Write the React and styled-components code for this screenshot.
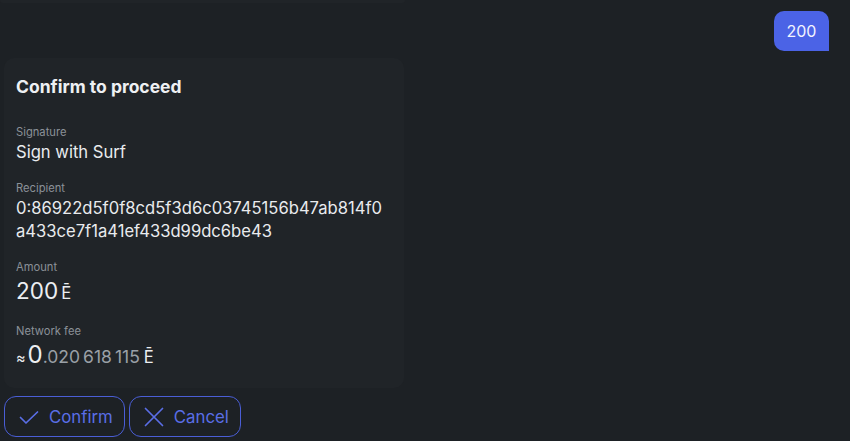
import React from 'react'
import styled, { createGlobalStyle } from 'styled-components'

const GlobalStyle = createGlobalStyle`
  html, body {
    margin: 0;
    padding: 0;
    background: #1d2125;
    font-family: Inter, "Noto Sans", sans-serif;
  }
`

const Page = styled.div`
  width: 850px;
  height: 441px;
  overflow: hidden;
  background: #1d2125;
  display: flex;
  flex-direction: column;
`

const PrevCard = styled.div`
  width: 405px;
  height: 3px;
  background: #202428;
  border-radius: 0 0 12px 12px;
`

const BubbleRow = styled.div`
  display: flex;
  justify-content: flex-end;
  padding: 8px 21px 0 0;
`

const Bubble = styled.div`
  height: 40px;
  padding: 0 12px;
  min-width: 31px;
  display: flex;
  align-items: center;
  justify-content: center;
  background: #4b63e6;
  color: #f2f4ff;
  font-size: 16px;
  border-radius: 10px 10px 0 10px;
`

const Card = styled.div`
  margin: 7px 0 0 4px;
  width: 372px;
  padding: 17px 16px 16px 12px;
  background: #202428;
  border-radius: 10px;
  display: flex;
  flex-direction: column;
`

const Title = styled.h2`
  margin: 0 0 26px;
  font-size: 17.5px;
  line-height: 24px;
  font-weight: 700;
  color: #eef0f3;
`

const Field = styled.div`
  display: flex;
  flex-direction: column;
  margin-bottom: 17px;
  &:last-child {
    margin-bottom: 0;
  }
`

const Label = styled.div`
  font-size: 11.2px;
  line-height: 14px;
  margin-bottom: ${p => p.$space || 2}px;
  color: #8b9198;
`

const Value = styled.div`
  font-size: 16.6px;
  line-height: 23px;
  color: #e9ebee;
  word-break: break-all;
`

const Money = styled.div`
  display: flex;
  align-items: baseline;
  color: #eceef1;
  line-height: 28px;
`

const Big = styled.span`
  font-size: ${p => p.$size || 22.5}px;
`

const Small = styled.span`
  font-size: ${p => p.$size || 16.6}px;
  color: ${p => p.$muted ? '#9aa0a7' : '#eceef1'};
  margin-left: ${p => p.$gap || 0}px;
  margin-right: ${p => p.$after || 0}px;
`

const Actions = styled.div`
  display: flex;
  gap: 4px;
  margin: 8px 0 0 4px;
`

const Button = styled.button`
  height: 41px;
  padding: 0 11px 0 12px;
  display: flex;
  align-items: center;
  gap: 8px;
  background: transparent;
  border: 1px solid #4a5ed6;
  border-radius: 12px;
  color: #5a6ee6;
  font-family: Inter, "Noto Sans", sans-serif;
  font-size: 16.8px;
  cursor: pointer;
`

const CheckIcon = () => (
  <svg width="24" height="24" viewBox="0 0 24 24" fill="none" stroke="currentColor" strokeWidth="1.7" strokeLinecap="round" strokeLinejoin="round">
    <path d="M3.5 12.5l5.5 5.5L20.5 7" />
  </svg>
)

const CrossIcon = () => (
  <svg width="24" height="24" viewBox="0 0 24 24" fill="none" stroke="currentColor" strokeWidth="1.7" strokeLinecap="round">
    <path d="M3.5 3.5l17 17M20.5 3.5l-17 17" />
  </svg>
)

export default function App () {
  return (
    <Page>
      <GlobalStyle />
      <PrevCard />
      <BubbleRow>
        <Bubble>200</Bubble>
      </BubbleRow>
      <Card>
        <Title>Confirm to proceed</Title>
        <Field>
          <Label>Signature</Label>
          <Value>Sign with Surf</Value>
        </Field>
        <Field>
          <Label>Recipient</Label>
          <Value>0:86922d5f0f8cd5f3d6c03745156b47ab814f0a433ce7f1a41ef433d99dc6be43</Value>
        </Field>
        <Field>
          <Label $space={3}>Amount</Label>
          <Money>
            <Big>200</Big>
            <Small $gap={3}>Ē</Small>
          </Money>
        </Field>
        <Field>
          <Label $space={3}>Network fee</Label>
          <Money>
            <Small $size={14.5} $after={2}>≈</Small>
            <Big $size={24}>0</Big>
            <Small $muted $size={17.5}>.020</Small>
            <Small $muted $size={17.5} $gap={3}>618</Small>
            <Small $muted $size={17.5} $gap={3}>115</Small>
            <Small $gap={4}>Ē</Small>
          </Money>
        </Field>
      </Card>
      <Actions>
        <Button><CheckIcon />Confirm</Button>
        <Button><CrossIcon />Cancel</Button>
      </Actions>
    </Page>
  )
}
